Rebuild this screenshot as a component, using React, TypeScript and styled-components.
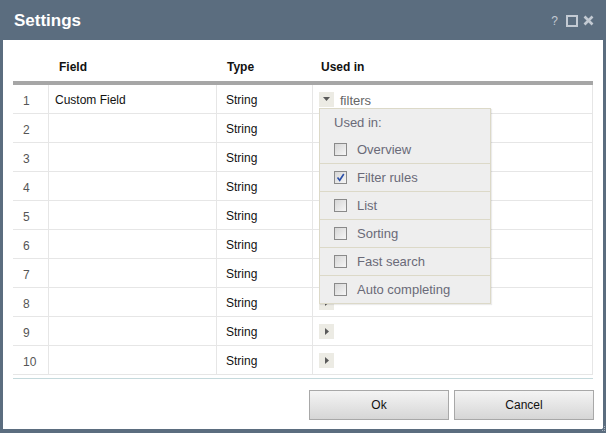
import styled, { createGlobalStyle } from "styled-components";

const GlobalStyle = createGlobalStyle`
  html, body {
    margin: 0;
    padding: 0;
    background: #5b6d7f;
  }
  body {
    font-family: "Liberation Sans", Arial, sans-serif;
    font-size: 12px;
  }
`;

const Window = styled.div`
  width: 606px;
  height: 433px;
  background: #5b6d7f;
  display: flex;
  flex-direction: column;
  box-sizing: border-box;
  padding: 0 3px 4px 3px;
  position: relative;
`;

const TitleBar = styled.div`
  height: 40px;
  display: flex;
  align-items: center;
  justify-content: space-between;
  padding: 1px 9px 0 11px;
  box-sizing: border-box;
  color: #ffffff;
`;

const Title = styled.h1`
  margin: 0;
  font-size: 17px;
  font-weight: bold;
  color: #ffffff;
`;

const TitleButtons = styled.div`
  display: flex;
  align-items: center;
  gap: 5px;
  color: #c3cad3;
`;

const Help = styled.span`
  font-size: 12px;
  margin-right: 3px;
`;

const Body = styled.div`
  flex: 1;
  background: #ffffff;
  padding: 13px 10px 0 10px;
  display: flex;
  flex-direction: column;
`;

const Table = styled.div`
  display: flex;
  flex-direction: column;
  border-bottom: 1px solid #c5d9dc;
  padding-bottom: 3px;
`;

const HeaderRow = styled.div`
  display: flex;
  height: 28px;
  align-items: center;
  border-bottom: 4px solid #a6a6a6;
  font-weight: bold;
  color: #111;
`;

const Row = styled.div`
  display: flex;
  height: 29px;
  box-sizing: border-box;
  border-bottom: 1px solid #e6e6e6;
  border-right: 1px solid #e6e6e6;
  color: #111;
`;

const Cell = styled.div<{ $w: number; $pad?: number; $line?: boolean; $drop?: number }>`
  width: ${(p) => p.$w}px;
  flex: ${(p) => (p.$w ? "none" : "1")};
  box-sizing: border-box;
  padding-left: ${(p) => p.$pad ?? 0}px;
  padding-top: ${(p) => p.$drop ?? 0}px;
  display: flex;
  align-items: center;
  border-right: ${(p) => (p.$line ? "1px solid #e6e6e6" : "none")};
  position: relative;
`;

const Num = styled.span`
  color: #555;
  padding-top: 1px;
`;

const Expander = styled.div`
  width: 15px;
  height: 15px;
  background: #ecebe4;
  display: flex;
  align-items: center;
  justify-content: center;
  margin-left: 6px;
`;

const Filters = styled.span`
  color: #666;
  margin-left: 6px;
  font-size: 13px;
  padding-top: 2px;
`;

const Popup = styled.div`
  position: absolute;
  left: 6px;
  top: 23px;
  width: 172px;
  box-sizing: border-box;
  background: #eeeeee;
  border: 1px solid #dcd9c8;
  box-shadow: 1px 1px 1px rgba(0, 0, 0, 0.08);
  z-index: 2;
  color: #6a6a78;
`;

const PopupTitle = styled.div`
  height: 26px;
  display: flex;
  align-items: center;
  padding-left: 14px;
  font-size: 13px;
`;

const Option = styled.label<{ $first?: boolean }>`
  height: 28px;
  box-sizing: border-box;
  display: flex;
  align-items: center;
  padding-left: 14px;
  gap: 10px;
  font-size: 13px;
  border-top: ${(p) => (p.$first ? "none" : "1px solid #dcd9c8")};
`;

const Box = styled.span`
  width: 13px;
  height: 13px;
  box-sizing: border-box;
  border: 1px solid #8a8a8a;
  background: linear-gradient(135deg, #d6d6d6, #f6f6f6);
  display: flex;
  align-items: center;
  justify-content: center;
`;

const Footer = styled.div`
  display: flex;
  justify-content: flex-end;
  gap: 5px;
  padding: 11px 0 0 0;
  margin-right: -1px;
`;

const Button = styled.button`
  width: 140px;
  height: 30px;
  border: 1px solid #a8a8a8;
  background: linear-gradient(#f4f4f4, #d6d6d6);
  font-family: "Liberation Sans", Arial, sans-serif;
  font-size: 12px;
  color: #111;
  padding: 0;
`;

const Grip = styled.svg`
  position: absolute;
  right: 0;
  bottom: 0;
`;

const options = [
  { label: "Overview", checked: false },
  { label: "Filter rules", checked: true },
  { label: "List", checked: false },
  { label: "Sorting", checked: false },
  { label: "Fast search", checked: false },
  { label: "Auto completing", checked: false },
];

function Arrow({ down }: { down?: boolean }) {
  return down ? (
    <svg width="7" height="4" viewBox="0 0 7 4">
      <path d="M0 0h7L3.5 4z" fill="#5a5a5a" />
    </svg>
  ) : (
    <svg width="4" height="7" viewBox="0 0 4 7">
      <path d="M0 0v7L4 3.5z" fill="#5a5a5a" />
    </svg>
  );
}

export default function App() {
  const rows = Array.from({ length: 10 }, (_, i) => i + 1);
  return (
    <>
      <GlobalStyle />
      <Window>
        <TitleBar>
          <Title>Settings</Title>
          <TitleButtons>
            <Help>?</Help>
            <svg width="12" height="12" viewBox="0 0 12 12">
              <rect x="1" y="1" width="10" height="10" fill="none" stroke="#c3cad3" strokeWidth="2" />
            </svg>
            <svg width="11" height="11" viewBox="0 0 11 11">
              <path d="M1.5 1.5l8 8M9.5 1.5l-8 8" stroke="#c3cad3" strokeWidth="2.6" />
            </svg>
          </TitleButtons>
        </TitleBar>
        <Body>
          <Table>
            <HeaderRow>
              <Cell $w={36} />
              <Cell $w={168} $pad={10}>Field</Cell>
              <Cell $w={96} $pad={10}>Type</Cell>
              <Cell $w={0} $pad={8}>Used in</Cell>
            </HeaderRow>
            {rows.map((n) => (
              <Row key={n}>
                <Cell $w={36} $pad={10} $drop={2} $line>
                  <Num>{n}</Num>
                </Cell>
                <Cell $w={168} $pad={6} $drop={2} $line>
                  {n === 1 ? "Custom Field" : ""}
                </Cell>
                <Cell $w={96} $pad={9} $drop={2} $line>
                  String
                </Cell>
                <Cell $w={0}>
                  <Expander>
                    <Arrow down={n === 1} />
                  </Expander>
                  {n === 1 && (
                    <>
                      <Filters>filters</Filters>
                      <Popup>
                        <PopupTitle>Used in:</PopupTitle>
                        {options.map((o, i) => (
                          <Option key={o.label} $first={i === 0}>
                            <Box>
                              {o.checked && (
                                <svg width="9" height="9" viewBox="0 0 9 9">
                                  <path d="M1.5 4.5l2.2 2.8L7.8 1" fill="none" stroke="#2a4fa8" strokeWidth="1.6" />
                                </svg>
                              )}
                            </Box>
                            {o.label}
                          </Option>
                        ))}
                      </Popup>
                    </>
                  )}
                </Cell>
              </Row>
            ))}
          </Table>
          <Footer>
            <Button>Ok</Button>
            <Button>Cancel</Button>
          </Footer>
        </Body>
        <Grip width="5" height="8" viewBox="0 0 5 8">
          <g fill="#aab4be">
            <rect x="3" y="1" width="1" height="1" />
            <rect x="3" y="3" width="1" height="1" />
            <rect x="1" y="3" width="1" height="1" />
            <rect x="3" y="5" width="1" height="1" />
            <rect x="1" y="5" width="1" height="1" />
          </g>
        </Grip>
      </Window>
    </>
  );
}
